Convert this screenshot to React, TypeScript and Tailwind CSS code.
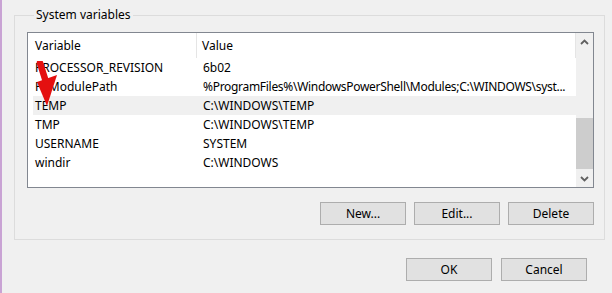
import React from 'react';

const rows = [
  { name: 'PROCESSOR_REVISION', value: '6b02' },
  { name: 'PSModulePath', value: '%ProgramFiles%\\WindowsPowerShell\\Modules;C:\\WINDOWS\\syst...', tight: true },
  { name: 'TEMP', value: 'C:\\WINDOWS\\TEMP', selected: true },
  { name: 'TMP', value: 'C:\\WINDOWS\\TEMP' },
  { name: 'USERNAME', value: 'SYSTEM' },
  { name: 'windir', value: 'C:\\WINDOWS' },
];

function WinButton({ label }: { label: string }) {
  return (
    <button className="w-[86px] h-[23px] bg-[#e1e1e1] border border-[#adadad] text-[12px] text-black leading-none">
      {label}
    </button>
  );
}

function Chevron({ up }: { up?: boolean }) {
  return (
    <svg width="9" height="6" viewBox="0 0 9 6">
      <path
        d={up ? 'M1 5 L4.5 1.5 L8 5' : 'M1 1 L4.5 4.5 L8 1'}
        fill="none"
        stroke="#606060"
        strokeWidth="1.8"
      />
    </svg>
  );
}

export default function App() {
  return (
    <div className="w-[612px] h-[293px] bg-[#f0f0f0] flex overflow-hidden font-['Noto_Sans',sans-serif] text-[12px] text-black">
      <div className="w-[2px] bg-[#c9a3d4]" />
      <div className="flex-1 pl-[12px] pt-[7px] flex flex-col">
        <fieldset className="w-[591px] h-[233px] border border-[#dcdcdc] pl-[12px] pr-[10px] pt-[9px] m-0 min-w-0">
          <legend className="ml-[7px] px-[2px] leading-[16px]">System variables</legend>
          <div className="relative flex h-[156px] border border-[#828790] bg-white">
            <div className="flex-1 min-w-0 pl-[5px]">
              <div className="flex h-[25px] items-center">
                <div className="w-[164px] h-full flex items-center pl-[2px] border-r border-[#e5e5e5]">Variable</div>
                <div className="flex-1 pl-[5px]">Value</div>
                <div className="w-px h-full bg-[#e5e5e5]" />
              </div>
              {rows.map((r) => (
                <div
                  key={r.name}
                  className={`flex h-[19px] items-center ${r.selected ? 'bg-[#f0f0f0]' : ''}`}
                >
                  <div className="w-[164px] pl-[2px] whitespace-nowrap">{r.name}</div>
                  <div className={`flex-1 min-w-0 pl-[6px] whitespace-nowrap ${r.tight ? 'tracking-[-0.3px]' : ''}`}>{r.value}</div>
                </div>
              ))}
            </div>
            <div className="w-[17px] bg-[#f0f0f0] flex flex-col">
              <div className="h-[17px] flex items-center justify-center">
                <Chevron up />
              </div>
              <div className="flex-1 pt-[68px]">
                <div className="h-[51px] bg-[#cdcdcd]" />
              </div>
              <div className="h-[17px] flex items-center justify-center">
                <Chevron />
              </div>
            </div>
            <svg className="absolute left-[4px] top-[28px]" width="28" height="46" viewBox="0 0 28 46">
              <path d="M8 2 L14 21" stroke="#e41010" strokeWidth="6.5" strokeLinecap="round" />
              <path d="M5 21 L25 14 L15 45 Z" fill="#e41010" />
            </svg>
          </div>
          <div className="flex justify-end gap-[8px] mt-[14px]">
            <WinButton label="New..." />
            <WinButton label="Edit..." />
            <WinButton label="Delete" />
          </div>
        </fieldset>
        <div className="flex justify-end gap-[9px] pr-[25px] mt-[18px]">
          <WinButton label="OK" />
          <WinButton label="Cancel" />
        </div>
      </div>
    </div>
  );
}
